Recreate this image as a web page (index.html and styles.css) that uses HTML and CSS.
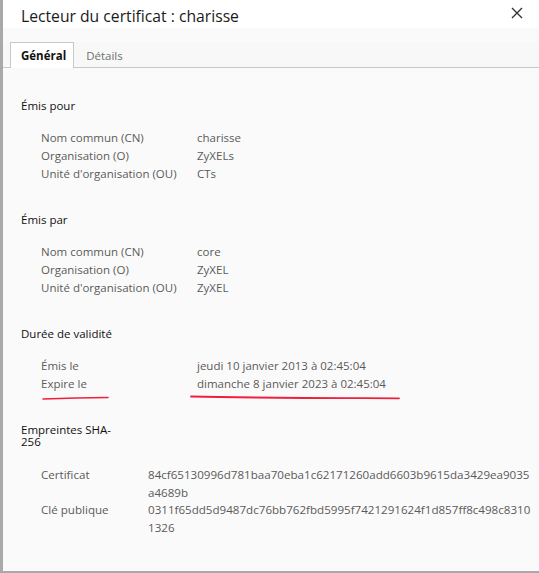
FILE: index.html
```html
<!DOCTYPE html>
<html lang="fr">
<head>
<meta charset="utf-8">
<title>Lecteur du certificat</title>
<link rel="stylesheet" href="styles.css">
</head>
<body>
<div class="window">
  <header class="titlebar">
    <h1 class="title">Lecteur du certificat : charisse</h1>
    <span class="close" aria-label="Fermer">
      <svg width="12" height="12" viewBox="0 0 12 12"><path d="M1 1L11 11M11 1L1 11" stroke="#333" stroke-width="1.4" fill="none"/></svg>
    </span>
  </header>
  <nav class="tabs">
    <span class="tab active">Général</span>
    <span class="tab">Détails</span>
  </nav>
  <main class="content">
    <section class="group">
      <h2 class="heading">Émis pour</h2>
      <div class="rows">
        <span class="label">Nom commun (CN)</span><span class="value">charisse</span>
        <span class="label">Organisation (O)</span><span class="value">ZyXELs</span>
        <span class="label">Unité d'organisation (OU)</span><span class="value">CTs</span>
      </div>
    </section>
    <section class="group">
      <h2 class="heading">Émis par</h2>
      <div class="rows">
        <span class="label">Nom commun (CN)</span><span class="value">core</span>
        <span class="label">Organisation (O)</span><span class="value">ZyXEL</span>
        <span class="label">Unité d'organisation (OU)</span><span class="value">ZyXEL</span>
      </div>
    </section>
    <section class="group validity">
      <h2 class="heading">Durée de validité</h2>
      <div class="rows">
        <span class="label">Émis le</span><span class="value">jeudi 10 janvier 2013 à 02:45:04</span>
        <span class="label">Expire le</span><span class="value">dimanche 8 janvier 2023 à 02:45:04</span>
      </div>
      <svg class="marks" width="400" height="14" viewBox="0 0 400 14">
        <path d="M40 10 C60 9.3 85 8.7 105 8.5" stroke="#f0203c" stroke-width="1.6" fill="none" stroke-linecap="round"/>
        <path d="M188 7.5 C250 9 320 9 396 9.3" stroke="#f0203c" stroke-width="1.8" fill="none" stroke-linecap="round"/>
      </svg>
    </section>
    <section class="group">
      <h2 class="heading narrow">Empreintes SHA-256</h2>
      <div class="rows hash">
        <span class="label">Certificat</span><span class="value">84cf65130996d781baa70eba1c62171260add6603b9615da3429ea9035<br>a4689b</span>
        <span class="label">Clé publique</span><span class="value">0311f65dd5d9487dc76bb762fbd5995f7421291624f1d857ff8c498c8310<br>1326</span>
      </div>
    </section>
  </main>
</div>
</body>
</html>
```
FILE: styles.css
```css
html, body {
  margin: 0;
  padding: 0;
  background: #fafafa;
}
body {
  font-family: "Open Sans", "Noto Sans", sans-serif;
  width: 539px;
  height: 573px;
  overflow: hidden;
}
.window {
  box-sizing: border-box;
  width: 539px;
  height: 573px;
  border-left: 3px solid #a9a9a9;
  border-bottom: 2px solid #a9a9a9;
  background: #fafafa;
  display: flex;
  flex-direction: column;
}
.titlebar {
  height: 28px;
  background: #ffffff;
  display: flex;
  align-items: center;
  justify-content: space-between;
  padding: 0 16px 0 18px;
}
.title {
  margin: 0;
  font-size: 15.7px;
  font-weight: 400;
  color: #1a1a1a;
  padding-top: 3px;
}
.close {
  display: flex;
  margin-top: -2px;
}
.tabs {
  margin-top: 14px;
  height: 25px;
  display: flex;
  align-items: stretch;
  padding-left: 7px;
  border-bottom: 1px solid #c8c8c8;
  background: #f8f8f8;
}
.tab {
  font-size: 11.5px;
  color: #707070;
  padding: 0 11px;
  display: flex;
  align-items: center;
  border: 1px solid transparent;
  border-bottom: none;
}
.tab.active {
  color: #111;
  font-weight: 700;
  background: #fff;
  border-color: #c8c8c8;
  margin-bottom: -1px;
  padding: 0 7px 0 10px;
}
.content {
  padding: 30px 0 0 18px;
  display: flex;
  flex-direction: column;
  gap: 29px;
}
.group {
  position: relative;
}
.heading {
  margin: 0 0 15px;
  font-size: 11.5px;
  font-weight: 400;
  color: #111;
  line-height: 16px;
}
.heading.narrow {
  width: 96px;
  line-height: 12px;
  margin: 2px 0 18px;
}
.rows {
  display: grid;
  grid-template-columns: 156px auto;
  padding-left: 20px;
  font-size: 11.5px;
  line-height: 18px;
  color: #5a5a5a;
}
.rows.hash {
  grid-template-columns: 107px auto;
  font-size: 11.6px;
  line-height: 17.5px;
}
.marks {
  position: absolute;
  left: -18px;
  top: 63px;
}
```
